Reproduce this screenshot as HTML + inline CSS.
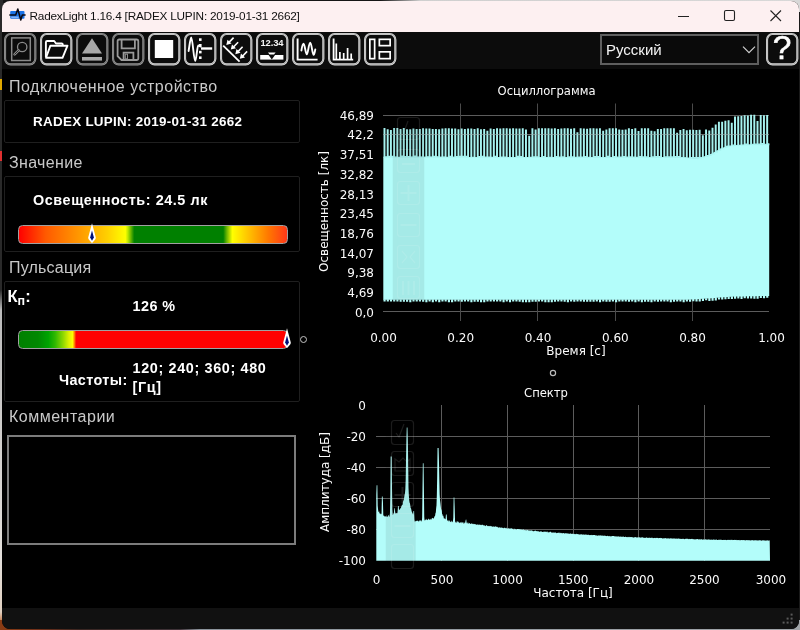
<!DOCTYPE html>
<html lang="ru">
<head>
<meta charset="utf-8">
<title>RadexLight 1.16.4</title>
<style>
*{box-sizing:border-box;margin:0;padding:0}
html,body{width:800px;height:630px;overflow:hidden;background:#1a1a1a}
body{position:relative;font-family:"Liberation Sans","DejaVu Sans",sans-serif;color:#fff}
.abs{position:absolute}
#desk-top{left:0;top:0;width:800px;height:12px;background:linear-gradient(90deg,#151515 0,#151515 380px,#cfcfcf 420px,#d8d8d8 800px)}
#desk-left{left:0;top:0;width:3px;height:630px;background:linear-gradient(180deg,#2a2a2a 0,#2a2a2a 79px,#e0a800 79px,#e0a800 90px,#2a2a2a 90px,#2a2a2a 151px,#e03030 151px,#e03030 161px,#2a2a2a 161px,#2a2a2a 290px,#bbb 310px,#e4e0dc 560px,#e0d0c0 612px,#c06830 624px,#8a3c14 630px)}
#desk-bot{left:0;top:620px;width:800px;height:10px;background:linear-gradient(90deg,#8a3c14 0,#70301a 40px,#3a2622 80px,#40343a 180px,#8c949c 200px,#a0a4a8 800px)}
#win{will-change:transform;left:2px;top:1px;width:796.5px;height:627.5px;background:#000;border-radius:8px;overflow:hidden}
#title{left:0;top:0;width:797px;height:30.5px;background:#fdf0f1}
#title .t{left:27.5px;top:7.8px;font-size:11.8px;color:#111;white-space:nowrap;letter-spacing:-0.22px}
#toolbar{left:0;top:30.5px;width:797px;height:37px;background:#0c0c0c}
.btn{position:absolute;top:1.5px;width:32.4px;height:32.4px}
.btn svg{position:absolute;left:0;top:0;width:32.4px;height:32.4px;overflow:visible}
.fr1{fill:#0c0c0c;stroke:#dedede;stroke-width:2.1}
.fr2{fill:none;stroke:#8c8c8c;stroke-width:0.6}
.dis .fr1{stroke:#9a9a9a}
.dis .fr2{stroke:#555}
.glabel{position:absolute;left:7px;font-size:16px;color:#c9c9c9;white-space:nowrap}
.gbox{position:absolute;left:2px;width:296px;border:1px solid #1f1f1f;border-radius:2px}
.b{font-weight:bold;white-space:nowrap;position:absolute}
.bar{position:absolute;left:15.5px;width:270px;height:18.5px;border:1.5px solid #a0a0a0;border-radius:4.5px}
svg text{font-family:"DejaVu Sans","Liberation Sans",sans-serif;font-size:12px;fill:#fbfbfb}
#t1,#t2{font-size:11.6px}
</style>
</head>
<body>
<div id="desk-top" class="abs"></div>
<div id="desk-left" class="abs"></div>
<div id="desk-bot" class="abs"></div>
<div id="win" class="abs">
  <div id="title" class="abs">
    <svg class="abs" style="left:7px;top:7px" width="18" height="16" viewBox="0 0 18 16">
      <rect x="1.2" y="2.9" width="14.3" height="7.9" rx="1" fill="#1a73e8"/>
      <rect x="2.2" y="8.6" width="7.4" height="1.2" fill="#9cc4ff"/>
      <path d="M0.3 7 H6.7 L8.8 1 L11.8 12 L13.3 7 H16.6" fill="none" stroke="#0a0a14" stroke-width="1.5" stroke-linejoin="round"/>
    </svg>
    <div class="abs t">RadexLight 1.16.4 [RADEX LUPIN: 2019-01-31 2662]</div>
    <svg class="abs" style="left:660px;top:0" width="137" height="31" viewBox="0 0 137 31">
      <path d="M16 15.5 H27" stroke="#222" stroke-width="1" fill="none"/>
      <rect x="62.5" y="9.5" width="10" height="10" rx="1.5" fill="none" stroke="#222" stroke-width="1.1"/>
      <path d="M108.5 9.5 L119 20 M119 9.5 L108.5 20" stroke="#222" stroke-width="1.1" fill="none"/>
    </svg>
  </div>
  <div id="toolbar" class="abs">
    <!-- 1: preview (disabled) -->
    <div class="btn dis" style="left:2px"><svg viewBox="0 0 32.4 32.4"><rect class="fr1" x="1.05" y="1.05" width="30.3" height="30.3" rx="5.6"/><rect class="fr2" x="1.05" y="1.05" width="30.3" height="30.3" rx="5.6"/>
      <rect x="7.7" y="4.9" width="18.6" height="22.6" fill="none" stroke="#8a8a8a" stroke-width="1.5"/>
      <circle cx="18.2" cy="14" r="4.7" fill="none" stroke="#8a8a8a" stroke-width="1.3"/>
      <path d="M14.6 17.4 L10.6 21.4" stroke="#8a8a8a" stroke-width="2.6" stroke-linecap="round" fill="none"/>
      <path d="M14.4 17.6 L10.8 21.2" stroke="#0c0c0c" stroke-width="0.8" stroke-linecap="round" fill="none"/>
    </svg></div>
    <!-- 2: open -->
    <div class="btn" style="left:38px"><svg viewBox="0 0 32.4 32.4"><rect class="fr1" x="1.05" y="1.05" width="30.3" height="30.3" rx="5.6"/><rect class="fr2" x="1.05" y="1.05" width="30.3" height="30.3" rx="5.6"/>
      <path d="M5.9 24 V9.2 Q5.9 8 7.1 8 H14.2 L16 10.5 H21.6 Q22.8 10.5 22.8 11.7 V12.5" fill="none" stroke="#fff" stroke-width="1.9" stroke-linejoin="round"/>
      <path d="M10.4 12.7 H27.5 L22.5 24.8 H6 Z" fill="none" stroke="#fff" stroke-width="1.9" stroke-linejoin="round"/>
    </svg></div>
    <!-- 3: eject -->
    <div class="btn dis" style="left:74px"><svg viewBox="0 0 32.4 32.4"><rect class="fr1" x="1.05" y="1.05" width="30.3" height="30.3" rx="5.6"/><rect class="fr2" x="1.05" y="1.05" width="30.3" height="30.3" rx="5.6"/>
      <path d="M16 5.2 L26 20.6 H6 Z" fill="#a8a8a8"/>
      <rect x="6" y="24" width="20" height="3.6" fill="#a8a8a8"/>
    </svg></div>
    <!-- 4: save (disabled) -->
    <div class="btn dis" style="left:110px"><svg viewBox="0 0 32.4 32.4"><rect class="fr1" x="1.05" y="1.05" width="30.3" height="30.3" rx="5.6"/><rect class="fr2" x="1.05" y="1.05" width="30.3" height="30.3" rx="5.6"/>
      <path d="M7.2 6.5 H24.5 Q26.3 6.5 26.3 8.3 V25.2 Q26.3 27 24.5 27 H9.5 L5.6 23.2 V8.1 Q5.6 6.5 7.2 6.5 Z" fill="none" stroke="#9a9a9a" stroke-width="1.8"/>
      <path d="M9.6 6.5 V15.4 H22.9 V6.5" fill="none" stroke="#9a9a9a" stroke-width="1.8"/>
      <path d="M11.6 27 V19.6 H21.4 V27" fill="none" stroke="#9a9a9a" stroke-width="1.8"/>
      <rect x="13.3" y="21.2" width="2.2" height="4.6" fill="none" stroke="#8c8c8c" stroke-width="1"/>
    </svg></div>
    <!-- 5: stop -->
    <div class="btn" style="left:146px"><svg viewBox="0 0 32.4 32.4"><rect class="fr1" x="1.05" y="1.05" width="30.3" height="30.3" rx="5.6"/><rect class="fr2" x="1.05" y="1.05" width="30.3" height="30.3" rx="5.6"/>
      <rect x="6.8" y="7" width="18.4" height="18" fill="#fff"/>
    </svg></div>
    <!-- 6: trigger -->
    <div class="btn" style="left:182px"><svg viewBox="0 0 32.4 32.4"><rect class="fr1" x="1.05" y="1.05" width="30.3" height="30.3" rx="5.6"/><rect class="fr2" x="1.05" y="1.05" width="30.3" height="30.3" rx="5.6"/>
      <path d="M4.6 18 C5.6 12 6.4 4.5 7.2 4.5 C8.6 4.5 9.8 28 11.2 28 C12.4 28 13.2 12.5 14.2 12.5 C15 12.5 15.6 13.6 16.6 13.6" fill="none" stroke="#fff" stroke-width="1.9" stroke-linecap="round"/>
      <rect x="15" y="5.3" width="2.6" height="2.6" fill="#fff"/>
      <rect x="15" y="11" width="2.6" height="2.6" fill="#fff"/>
      <rect x="15" y="17.8" width="2.6" height="2.6" fill="#fff"/>
      <rect x="15" y="23.4" width="2.6" height="2.6" fill="#fff"/>
      <rect x="17" y="14.3" width="11.2" height="2.4" fill="#fff"/>
    </svg></div>
    <!-- 7: light sensor -->
    <div class="btn" style="left:218px"><svg viewBox="0 0 32.4 32.4"><rect class="fr1" x="1.05" y="1.05" width="30.3" height="30.3" rx="5.6"/><rect class="fr2" x="1.05" y="1.05" width="30.3" height="30.3" rx="5.6"/>
      <path d="M3.2 12.6 L19.6 28.6" stroke="#fff" stroke-width="1.8" fill="none"/>
      <g id="arr"><path d="M13.6 4.6 L9 9.4" stroke="#fff" stroke-width="1.6" fill="none"/><path d="M6.3 12 L7.5 6.8 L11.5 10.6 Z" fill="#fff"/></g>
      <use href="#arr" x="4.5" y="4.6"/>
      <use href="#arr" x="9" y="9.2"/>
      <use href="#arr" x="13.5" y="13.8"/>
    </svg></div>
    <!-- 8: 12.34 -->
    <div class="btn" style="left:254px"><svg viewBox="0 0 32.4 32.4"><rect class="fr1" x="1.05" y="1.05" width="30.3" height="30.3" rx="5.6"/><rect class="fr2" x="1.05" y="1.05" width="30.3" height="30.3" rx="5.6"/>
      <text x="16" y="13.2" text-anchor="middle" style="font-family:'Liberation Sans',sans-serif;font-weight:bold;font-size:9.4px;fill:#f4f4f4;letter-spacing:-0.1px">12.34</text>
      <rect x="4.2" y="22" width="23.2" height="4.6" fill="#fff"/>
      <path d="M11.6 19.6 H20 L15.8 25.4 Z" fill="#0c0c0c" stroke="#0c0c0c" stroke-width="1.2"/>
      <path d="M12 19.4 H19.6 L18 21.6 H13.6 Z" fill="#fff"/>
    </svg></div>
    <!-- 9: oscillogram -->
    <div class="btn" style="left:290px"><svg viewBox="0 0 32.4 32.4"><rect class="fr1" x="1.05" y="1.05" width="30.3" height="30.3" rx="5.6"/><rect class="fr2" x="1.05" y="1.05" width="30.3" height="30.3" rx="5.6"/>
      <path d="M5.6 5.4 V26.6 H25.6" fill="none" stroke="#fff" stroke-width="1.9"/>
      <path d="M9.4 17.5 C10 14 10.8 10.8 11.6 10.8 C12.8 10.8 13.6 21.4 14.8 21.4 C16 21.4 16.8 9.6 18.2 9.6 C19.6 9.6 20.4 21.8 21.6 21.8 C22.4 21.8 22.8 18.6 23.3 16.4" fill="none" stroke="#fff" stroke-width="1.9" stroke-linecap="round"/>
    </svg></div>
    <!-- 10: spectrum -->
    <div class="btn" style="left:326px"><svg viewBox="0 0 32.4 32.4"><rect class="fr1" x="1.05" y="1.05" width="30.3" height="30.3" rx="5.6"/><rect class="fr2" x="1.05" y="1.05" width="30.3" height="30.3" rx="5.6"/>
      <path d="M5.6 5.4 V26.6 H25.2" fill="none" stroke="#fff" stroke-width="1.8"/>
      <path d="M8.3 10.4 V26 M11.9 19 V26 M15.7 20 V26 M19.6 15 V26 M23.2 20.4 V26" stroke="#fff" stroke-width="1.7" fill="none"/>
    </svg></div>
    <!-- 11: layout -->
    <div class="btn" style="left:362px"><svg viewBox="0 0 32.4 32.4"><rect class="fr1" x="1.05" y="1.05" width="30.3" height="30.3" rx="5.6"/><rect class="fr2" x="1.05" y="1.05" width="30.3" height="30.3" rx="5.6"/>
      <rect x="5.85" y="6.35" width="4.8" height="19.3" fill="none" stroke="#fff" stroke-width="1.7"/>
      <rect x="15.35" y="6.35" width="10.8" height="6.3" fill="none" stroke="#fff" stroke-width="1.7"/>
      <rect x="15.35" y="18.85" width="10.8" height="6.8" fill="none" stroke="#fff" stroke-width="1.7"/>
    </svg></div>
    <!-- combo -->
    <div class="abs" style="left:597.5px;top:2.5px;width:159.5px;height:31px;border:2px solid #5f5f5f;background:#0a0a0a">
      <div class="abs" style="left:4.5px;top:4.5px;font-size:15px;color:#f4f4f4;white-space:nowrap" id="lang">Русский</div>
      <svg class="abs" style="left:140px;top:9px" width="16" height="10" viewBox="0 0 16 10"><path d="M1 1.6 L7 7.6 L13 1.6" fill="none" stroke="#d0d0d0" stroke-width="1.2"/></svg>
    </div>
    <!-- help -->
    <div class="btn" style="left:764px"><svg viewBox="0 0 32.4 32.4"><rect class="fr1" x="1.05" y="1.05" width="30.3" height="30.3" rx="5.6"/><rect class="fr2" x="1.05" y="1.05" width="30.3" height="30.3" rx="5.6"/></svg><div class="abs" style="left:0px;top:-2.7px;width:32px;text-align:center;font-size:33.5px;line-height:36px;color:#fff;-webkit-text-stroke:0.5px #fff" id="q">?</div></div>
  </div>

  <!-- left panel -->
  <div class="glabel" style="top:76.6px;letter-spacing:0.5px" id="gl1">Подключенное устройство</div>
  <div class="gbox" style="top:98.5px;height:43.5px"></div>
  <div class="b" style="left:31px;top:112.5px;font-size:13.4px;letter-spacing:0.3px" id="dev">RADEX LUPIN: 2019-01-31 2662</div>

  <div class="glabel" style="top:153.1px;letter-spacing:0.35px" id="gl2">Значение</div>
  <div class="gbox" style="top:175px;height:76px"></div>
  <div class="b" style="left:31px;top:191px;font-size:14.4px;letter-spacing:0.57px" id="lux">Освещенность: 24.5 лк</div>
  <div class="bar" style="top:224px;background:linear-gradient(90deg,#ff0000 0%,#ff5a00 10%,#ffa000 24%,#ffd000 33%,#ffff00 39.7%,#c0e800 40.6%,#008000 43%,#008000 76.2%,#70b800 77.6%,#ffff00 79.6%,#ffc800 85%,#ff7800 93%,#ff3818 100%)"></div>
  <svg class="abs" style="left:84px;top:222.4px" width="12" height="22" viewBox="0 0 12 22"><path d="M6 0.3 L9.8 14.6 Q9.9 15.6 9.2 16.4 L6.6 19.6 Q6 20.2 5.4 19.6 L2.8 16.4 Q2.1 15.6 2.2 14.6 Z" fill="#fff"/><path d="M6 7.6 L7.9 14.6 L6 17.8 L4.1 14.6 Z" fill="#00107a"/></svg>

  <div class="glabel" style="top:258px;letter-spacing:0.2px" id="gl3">Пульсация</div>
  <div class="gbox" style="top:280px;height:121px"></div>
  <div class="b" style="left:5.5px;top:285.5px;font-size:16.5px" id="kp">К<span style="font-size:12.5px;position:relative;top:3.5px">п</span>:</div>
  <div class="b" style="left:130.5px;top:296.5px;font-size:14.4px;letter-spacing:0.46px" id="pct">126 %</div>
  <div class="bar" style="top:329.2px;background:linear-gradient(90deg,#008000 0%,#008800 7%,#00a400 11%,#30b800 13.5%,#90d800 16.5%,#d8f000 18.5%,#ffff00 20%,#ff8000 20.7%,#ff0000 21.3%,#ff0000 100%)"></div>
  <svg class="abs" style="left:278.6px;top:327.4px" width="12" height="22" viewBox="0 0 12 22"><path d="M6 0.3 L9.8 14.6 Q9.9 15.6 9.2 16.4 L6.6 19.6 Q6 20.2 5.4 19.6 L2.8 16.4 Q2.1 15.6 2.2 14.6 Z" fill="#fff"/><path d="M6 7.6 L7.9 14.6 L6 17.8 L4.1 14.6 Z" fill="#00107a"/></svg>
  <div class="abs" style="left:297.9px;top:334.6px;width:7px;height:7px;border:1.5px solid #c4c4c4;border-radius:50%"></div>
  <div class="b" style="left:57px;top:370.5px;font-size:14.4px;letter-spacing:0.38px" id="freq">Частоты:</div>
  <div class="b" style="left:130.5px;top:357.6px;font-size:14.4px;line-height:19.8px;white-space:normal;width:160px;letter-spacing:0.64px" id="fv">120; 240; 360; 480 [Гц]</div>

  <div class="glabel" style="top:407.2px;letter-spacing:0.5px" id="gl4">Комментарии</div>
  <div class="abs" style="left:5.2px;top:433.6px;width:289px;height:110.4px;border:2px solid #7c7c7c;background:#000"></div>

  <!-- status bar -->
  <div class="abs" style="left:0;top:606.5px;width:797px;height:22px;background:#111"></div>
  <svg class="abs" style="left:779.7px;top:611.8px" width="14" height="14" viewBox="0 0 14 14" fill="#5a5a5a">
    <rect x="8.6" y="0.6" width="2" height="2"/><rect x="4.6" y="4.6" width="2" height="2"/><rect x="8.6" y="4.6" width="2" height="2"/><rect x="0.6" y="8.6" width="2" height="2"/><rect x="4.6" y="8.6" width="2" height="2"/><rect x="8.6" y="8.6" width="2" height="2"/>
  </svg>

  <!-- charts: svg positioned so that its coords = page coords -->
  <svg class="abs" style="left:-2px;top:-1px" width="800" height="630" viewBox="0 0 800 630">
    <!-- Oscillogram -->
    <text x="546.5" y="94.5" text-anchor="middle" id="t1">Осциллограмма</text>
    <g stroke="#5c5c5c" stroke-width="1" fill="none">
      <path d="M383 115.5 H769 M383 134.5 H769 M383 311.5 H769"/>
      <path d="M460.5 103.5 V321 M537.5 103.5 V321 M615.5 103.5 V321 M692.5 103.5 V321" stroke="#4a4a4a"/>
    </g>
    <path d="M383.3 156.5 L383.3 156.8 L387.3 156.8 L391.3 156.8 L395.3 156.8 L399.3 156.8 L403.3 156.8 L407.3 156.8 L411.3 156.8 L415.3 156.8 L419.3 156.8 L423.3 156.8 L427.3 156.8 L431.3 156.8 L435.3 156.8 L439.3 156.8 L443.3 156.8 L447.3 156.8 L451.3 156.8 L455.3 156.8 L459.3 156.9 L463.3 156.9 L467.3 156.9 L471.3 156.9 L475.3 156.9 L479.3 156.9 L483.3 156.9 L487.3 156.9 L491.3 156.9 L495.3 156.9 L499.3 156.9 L503.3 156.9 L507.3 156.9 L511.3 156.9 L515.3 156.9 L519.3 156.9 L523.3 156.9 L527.3 156.9 L531.3 156.9 L535.3 156.9 L539.3 156.9 L543.3 156.9 L547.3 156.9 L551.3 156.9 L555.3 156.9 L559.3 156.9 L563.3 156.9 L567.3 156.9 L571.3 156.9 L575.3 156.9 L579.3 156.9 L583.3 156.9 L587.3 156.9 L591.3 156.9 L595.3 156.9 L599.3 156.9 L603.3 156.9 L607.3 157.0 L611.3 157.0 L615.3 157.0 L619.3 157.0 L623.3 157.0 L627.3 157.0 L631.3 157.0 L635.3 157.0 L639.3 157.0 L643.3 157.0 L647.3 157.0 L651.3 157.0 L655.3 157.0 L659.3 157.0 L663.3 157.0 L667.3 157.0 L671.3 157.0 L675.3 157.0 L679.3 157.0 L683.3 157.3 L687.3 157.6 L691.3 157.9 L695.3 158.2 L699.3 157.5 L703.3 156.5 L707.3 155.5 L711.3 153.7 L715.3 151.5 L719.3 149.2 L723.3 147.4 L727.3 145.8 L731.3 145.4 L735.3 145.0 L739.3 144.8 L743.3 144.6 L747.3 144.4 L751.3 144.3 L755.3 144.3 L759.3 144.3 L763.3 144.3 L767.3 144.3 L769.2 144.3 L769.2 296.0 L767.3 296.0 L763.3 296.1 L759.3 296.1 L755.3 296.2 L751.3 296.3 L747.3 296.3 L743.3 296.4 L739.3 296.4 L735.3 296.5 L731.3 296.8 L727.3 297.0 L723.3 297.3 L719.3 297.6 L715.3 297.9 L711.3 298.2 L707.3 298.5 L703.3 298.8 L699.3 299.0 L695.3 299.3 L691.3 299.6 L687.3 299.7 L683.3 299.7 L679.3 299.7 L675.3 299.7 L671.3 299.7 L667.3 299.7 L663.3 299.7 L659.3 299.7 L655.3 299.7 L651.3 299.7 L647.3 299.7 L643.3 299.7 L639.3 299.7 L635.3 299.7 L631.3 299.7 L627.3 299.7 L623.3 299.7 L619.3 299.7 L615.3 299.7 L611.3 299.7 L607.3 299.7 L603.3 299.7 L599.3 299.7 L595.3 299.7 L591.3 299.7 L587.3 299.7 L583.3 299.7 L579.3 299.7 L575.3 299.7 L571.3 299.7 L567.3 299.7 L563.3 299.7 L559.3 299.7 L555.3 299.7 L551.3 299.7 L547.3 299.7 L543.3 299.7 L539.3 299.7 L535.3 299.7 L531.3 299.7 L527.3 299.7 L523.3 299.7 L519.3 299.7 L515.3 299.7 L511.3 299.7 L507.3 299.7 L503.3 299.7 L499.3 299.7 L495.3 299.7 L491.3 299.7 L487.3 299.7 L483.3 299.7 L479.3 299.7 L475.3 299.7 L471.3 299.7 L467.3 299.7 L463.3 299.7 L459.3 299.7 L455.3 299.7 L451.3 299.7 L447.3 299.7 L443.3 299.7 L439.3 299.7 L435.3 299.7 L431.3 299.7 L427.3 299.7 L423.3 299.7 L419.3 299.7 L415.3 299.7 L411.3 299.7 L407.3 299.7 L403.3 299.7 L399.3 299.7 L395.3 299.7 L391.3 299.7 L387.3 299.7 L383.3 299.7Z" fill="#b3fdfa"/>
    <path d="M383.50 157.50 h1.95 V128.10 h-1.95 Z M385.45 157.70 h1.27 V156.13 h-1.27 Z M386.72 157.50 h1.95 V129.30 h-1.95 Z M388.67 157.70 h1.27 V155.65 h-1.27 Z M389.93 157.50 h1.95 V129.93 h-1.95 Z M391.88 157.70 h1.27 V155.64 h-1.27 Z M393.15 157.51 h1.95 V128.11 h-1.95 Z M395.10 157.71 h1.27 V156.39 h-1.27 Z M396.36 157.51 h1.95 V128.11 h-1.95 Z M398.31 157.71 h1.27 V157.02 h-1.27 Z M399.58 157.51 h1.95 V128.91 h-1.95 Z M401.53 157.71 h1.27 V155.59 h-1.27 Z M402.80 157.51 h1.95 V128.11 h-1.95 Z M404.75 157.71 h1.27 V155.98 h-1.27 Z M406.01 157.52 h1.95 V129.32 h-1.95 Z M407.96 157.72 h1.27 V156.01 h-1.27 Z M409.23 157.52 h1.95 V129.32 h-1.95 Z M411.18 157.72 h1.27 V156.54 h-1.27 Z M412.44 157.52 h1.95 V128.52 h-1.95 Z M414.39 157.72 h1.27 V155.62 h-1.27 Z M415.66 157.52 h1.95 V128.92 h-1.95 Z M417.61 157.72 h1.27 V156.61 h-1.27 Z M418.87 157.52 h1.95 V128.92 h-1.95 Z M420.82 157.72 h1.27 V156.46 h-1.27 Z M422.09 157.53 h1.95 V128.13 h-1.95 Z M424.04 157.73 h1.27 V156.80 h-1.27 Z M425.31 157.53 h1.95 V128.43 h-1.95 Z M427.26 157.73 h1.27 V156.37 h-1.27 Z M428.52 157.53 h1.95 V128.43 h-1.95 Z M430.47 157.73 h1.27 V156.50 h-1.27 Z M431.74 157.53 h1.95 V128.93 h-1.95 Z M433.69 157.73 h1.27 V155.80 h-1.27 Z M434.95 157.53 h1.95 V128.93 h-1.95 Z M436.90 157.73 h1.27 V156.21 h-1.27 Z M438.17 157.54 h1.95 V129.34 h-1.95 Z M440.12 157.74 h1.27 V156.80 h-1.27 Z M441.38 157.54 h1.95 V128.44 h-1.95 Z M443.33 157.74 h1.27 V156.49 h-1.27 Z M444.60 157.54 h1.95 V128.14 h-1.95 Z M446.55 157.74 h1.27 V157.05 h-1.27 Z M447.82 157.54 h1.95 V128.14 h-1.95 Z M449.77 157.74 h1.27 V155.64 h-1.27 Z M451.03 157.55 h1.95 V128.55 h-1.95 Z M452.98 157.75 h1.27 V156.86 h-1.27 Z M454.25 157.55 h1.95 V128.55 h-1.95 Z M456.20 157.75 h1.27 V156.10 h-1.27 Z M457.46 157.55 h1.95 V129.35 h-1.95 Z M459.41 157.75 h1.27 V155.74 h-1.27 Z M460.68 157.55 h1.95 V128.45 h-1.95 Z M462.63 157.75 h1.27 V155.76 h-1.27 Z M463.90 157.55 h1.95 V128.95 h-1.95 Z M465.85 157.75 h1.27 V155.68 h-1.27 Z M467.11 157.56 h1.95 V128.46 h-1.95 Z M469.06 157.76 h1.27 V156.97 h-1.27 Z M470.33 157.56 h1.95 V128.46 h-1.95 Z M472.28 157.76 h1.27 V156.69 h-1.27 Z M473.54 157.56 h1.95 V128.96 h-1.95 Z M475.49 157.76 h1.27 V157.09 h-1.27 Z M476.76 157.56 h1.95 V128.16 h-1.95 Z M478.71 157.76 h1.27 V155.93 h-1.27 Z M479.98 157.57 h1.95 V129.37 h-1.95 Z M481.93 157.77 h1.27 V155.86 h-1.27 Z M483.19 157.57 h1.95 V128.97 h-1.95 Z M485.14 157.77 h1.27 V156.42 h-1.27 Z M486.41 157.57 h1.95 V130.71 h-1.95 Z M488.36 157.77 h1.27 V156.39 h-1.27 Z M489.62 157.57 h1.95 V128.57 h-1.95 Z M491.57 157.77 h1.27 V156.85 h-1.27 Z M492.84 157.57 h1.95 V128.97 h-1.95 Z M494.79 157.77 h1.27 V155.74 h-1.27 Z M496.05 157.58 h1.95 V128.18 h-1.95 Z M498.00 157.78 h1.27 V157.15 h-1.27 Z M499.27 157.58 h1.95 V128.48 h-1.95 Z M501.22 157.78 h1.27 V156.54 h-1.27 Z M502.49 157.58 h1.95 V128.18 h-1.95 Z M504.44 157.78 h1.27 V156.44 h-1.27 Z M505.70 157.58 h1.95 V128.18 h-1.95 Z M507.65 157.78 h1.27 V156.98 h-1.27 Z M508.92 157.58 h1.95 V128.48 h-1.95 Z M510.87 157.78 h1.27 V157.11 h-1.27 Z M512.13 157.59 h1.95 V128.19 h-1.95 Z M514.08 157.79 h1.27 V156.95 h-1.27 Z M515.35 157.59 h1.95 V128.49 h-1.95 Z M517.30 157.79 h1.27 V155.73 h-1.27 Z M518.57 157.59 h1.95 V128.59 h-1.95 Z M520.52 157.79 h1.27 V156.01 h-1.27 Z M521.78 157.59 h1.95 V128.19 h-1.95 Z M523.73 157.79 h1.27 V157.12 h-1.27 Z M525.00 157.60 h1.95 V129.40 h-1.95 Z M526.95 157.80 h1.27 V157.06 h-1.27 Z M528.21 157.60 h1.95 V135.65 h-1.95 Z M530.16 157.80 h1.27 V156.71 h-1.27 Z M531.43 157.60 h1.95 V128.20 h-1.95 Z M533.38 157.80 h1.27 V156.17 h-1.27 Z M534.64 157.60 h1.95 V129.40 h-1.95 Z M536.59 157.80 h1.27 V156.13 h-1.27 Z M537.86 157.60 h1.95 V128.20 h-1.95 Z M539.81 157.80 h1.27 V156.89 h-1.27 Z M541.08 157.61 h1.95 V128.21 h-1.95 Z M543.03 157.81 h1.27 V155.93 h-1.27 Z M544.29 157.61 h1.95 V128.21 h-1.95 Z M546.24 157.81 h1.27 V157.19 h-1.27 Z M547.51 157.61 h1.95 V128.21 h-1.95 Z M549.46 157.81 h1.27 V156.72 h-1.27 Z M550.72 157.61 h1.95 V128.61 h-1.95 Z M552.67 157.81 h1.27 V157.19 h-1.27 Z M553.94 157.62 h1.95 V128.22 h-1.95 Z M555.89 157.82 h1.27 V155.98 h-1.27 Z M557.16 157.62 h1.95 V129.02 h-1.95 Z M559.11 157.82 h1.27 V156.62 h-1.27 Z M560.37 157.62 h1.95 V128.62 h-1.95 Z M562.32 157.82 h1.27 V156.17 h-1.27 Z M563.59 157.62 h1.95 V128.22 h-1.95 Z M565.54 157.82 h1.27 V157.08 h-1.27 Z M566.80 157.62 h1.95 V128.22 h-1.95 Z M568.75 157.82 h1.27 V156.32 h-1.27 Z M570.02 157.63 h1.95 V128.63 h-1.95 Z M571.97 157.83 h1.27 V156.26 h-1.27 Z M573.23 157.63 h1.95 V128.23 h-1.95 Z M575.18 157.83 h1.27 V156.79 h-1.27 Z M576.45 157.63 h1.95 V132.34 h-1.95 Z M578.40 157.83 h1.27 V156.58 h-1.27 Z M579.67 157.63 h1.95 V128.23 h-1.95 Z M581.62 157.83 h1.27 V156.61 h-1.27 Z M582.88 157.63 h1.95 V128.53 h-1.95 Z M584.83 157.83 h1.27 V155.88 h-1.27 Z M586.10 157.64 h1.95 V128.64 h-1.95 Z M588.05 157.84 h1.27 V156.68 h-1.27 Z M589.31 157.64 h1.95 V128.24 h-1.95 Z M591.26 157.84 h1.27 V156.96 h-1.27 Z M592.53 157.64 h1.95 V128.24 h-1.95 Z M594.48 157.84 h1.27 V156.11 h-1.27 Z M595.75 157.64 h1.95 V128.54 h-1.95 Z M597.70 157.84 h1.27 V156.06 h-1.27 Z M598.96 157.65 h1.95 V128.25 h-1.95 Z M600.91 157.85 h1.27 V157.10 h-1.27 Z M602.18 157.65 h1.95 V130.74 h-1.95 Z M604.13 157.85 h1.27 V156.95 h-1.27 Z M605.39 157.65 h1.95 V129.45 h-1.95 Z M607.34 157.85 h1.27 V155.86 h-1.27 Z M608.61 157.65 h1.95 V128.25 h-1.95 Z M610.56 157.85 h1.27 V157.05 h-1.27 Z M611.82 157.65 h1.95 V128.25 h-1.95 Z M613.77 157.85 h1.27 V155.93 h-1.27 Z M615.04 157.66 h1.95 V128.26 h-1.95 Z M616.99 157.86 h1.27 V156.55 h-1.27 Z M618.26 157.66 h1.95 V129.46 h-1.95 Z M620.21 157.86 h1.27 V156.55 h-1.27 Z M621.47 157.66 h1.95 V129.85 h-1.95 Z M623.42 157.86 h1.27 V155.97 h-1.27 Z M624.69 157.66 h1.95 V129.46 h-1.95 Z M626.64 157.86 h1.27 V156.39 h-1.27 Z M627.90 157.66 h1.95 V128.26 h-1.95 Z M629.85 157.86 h1.27 V156.37 h-1.27 Z M631.12 157.67 h1.95 V129.07 h-1.95 Z M633.07 157.87 h1.27 V156.48 h-1.27 Z M634.34 157.67 h1.95 V128.27 h-1.95 Z M636.29 157.87 h1.27 V156.79 h-1.27 Z M637.55 157.67 h1.95 V131.11 h-1.95 Z M639.50 157.87 h1.27 V156.00 h-1.27 Z M640.77 157.67 h1.95 V128.27 h-1.95 Z M642.72 157.87 h1.27 V156.30 h-1.27 Z M643.98 157.68 h1.95 V128.28 h-1.95 Z M645.93 157.88 h1.27 V156.36 h-1.27 Z M647.20 157.68 h1.95 V128.28 h-1.95 Z M649.15 157.88 h1.27 V157.11 h-1.27 Z M650.41 157.68 h1.95 V130.75 h-1.95 Z M652.36 157.88 h1.27 V156.27 h-1.27 Z M653.63 157.68 h1.95 V131.23 h-1.95 Z M655.58 157.88 h1.27 V156.03 h-1.27 Z M656.85 157.68 h1.95 V129.08 h-1.95 Z M658.80 157.88 h1.27 V155.94 h-1.27 Z M660.06 157.69 h1.95 V129.09 h-1.95 Z M662.01 157.89 h1.27 V157.28 h-1.27 Z M663.28 157.69 h1.95 V128.29 h-1.95 Z M665.23 157.89 h1.27 V156.26 h-1.27 Z M666.49 157.69 h1.95 V128.29 h-1.95 Z M668.44 157.89 h1.27 V156.23 h-1.27 Z M669.71 157.69 h1.95 V128.29 h-1.95 Z M671.66 157.89 h1.27 V156.31 h-1.27 Z M672.93 157.70 h1.95 V128.30 h-1.95 Z M674.88 157.90 h1.27 V155.88 h-1.27 Z M676.14 157.70 h1.95 V132.72 h-1.95 Z M678.09 157.90 h1.27 V156.12 h-1.27 Z M679.36 157.70 h1.95 V130.07 h-1.95 Z M681.31 157.90 h1.27 V156.91 h-1.27 Z M682.57 157.91 h1.95 V129.09 h-1.95 Z M684.52 158.11 h1.27 V157.22 h-1.27 Z M685.79 158.17 h1.95 V130.37 h-1.95 Z M687.74 158.37 h1.27 V157.64 h-1.27 Z M689.00 158.43 h1.95 V129.65 h-1.95 Z M690.95 158.63 h1.27 V156.88 h-1.27 Z M692.22 158.69 h1.95 V129.80 h-1.95 Z M694.17 158.89 h1.27 V157.12 h-1.27 Z M695.44 158.95 h1.95 V130.10 h-1.95 Z M697.39 159.15 h1.27 V157.09 h-1.27 Z M698.65 158.34 h1.95 V129.80 h-1.95 Z M700.60 158.54 h1.27 V157.06 h-1.27 Z M701.87 157.53 h1.95 V135.24 h-1.95 Z M703.82 157.73 h1.27 V157.00 h-1.27 Z M705.08 156.73 h1.95 V129.56 h-1.95 Z M707.03 156.93 h1.27 V155.11 h-1.27 Z M708.30 155.85 h1.95 V130.49 h-1.95 Z M710.25 156.05 h1.27 V154.14 h-1.27 Z M711.52 154.24 h1.95 V127.66 h-1.95 Z M713.47 154.44 h1.27 V153.46 h-1.27 Z M714.73 152.54 h1.95 V124.56 h-1.95 Z M716.68 152.74 h1.27 V150.83 h-1.27 Z M717.95 150.53 h1.95 V121.65 h-1.95 Z M719.90 150.73 h1.27 V148.59 h-1.27 Z M721.16 149.09 h1.95 V121.80 h-1.95 Z M723.11 149.29 h1.27 V148.66 h-1.27 Z M724.38 147.67 h1.95 V120.68 h-1.95 Z M726.33 147.87 h1.27 V145.84 h-1.27 Z M727.59 146.44 h1.95 V120.23 h-1.95 Z M729.54 146.64 h1.27 V145.78 h-1.27 Z M730.81 146.12 h1.95 V122.79 h-1.95 Z M732.76 146.32 h1.27 V144.46 h-1.27 Z M734.03 145.80 h1.95 V116.50 h-1.95 Z M735.98 146.00 h1.27 V144.96 h-1.27 Z M737.24 145.64 h1.95 V116.14 h-1.95 Z M739.19 145.84 h1.27 V145.21 h-1.27 Z M740.46 145.48 h1.95 V115.98 h-1.95 Z M742.41 145.68 h1.27 V144.66 h-1.27 Z M743.67 145.32 h1.95 V115.31 h-1.95 Z M745.62 145.52 h1.27 V143.45 h-1.27 Z M746.89 145.16 h1.95 V115.45 h-1.95 Z M748.84 145.36 h1.27 V144.71 h-1.27 Z M750.11 145.00 h1.95 V114.80 h-1.95 Z M752.06 145.20 h1.27 V143.74 h-1.27 Z M753.32 145.00 h1.95 V114.83 h-1.95 Z M755.27 145.20 h1.27 V143.42 h-1.27 Z M756.54 145.00 h1.95 V121.06 h-1.95 Z M758.49 145.20 h1.27 V143.39 h-1.27 Z M759.75 145.00 h1.95 V114.90 h-1.95 Z M761.70 145.20 h1.27 V143.00 h-1.27 Z M762.97 145.00 h1.95 V115.23 h-1.95 Z M764.92 145.20 h1.27 V143.80 h-1.27 Z M766.18 145.00 h1.95 V114.97 h-1.95 Z M768.13 145.20 h1.27 V143.15 h-1.27 Z" fill="#a6f2ef"/>
    <path d="M383.50 299.20 h2.15 V301.40 h-2.15 Z M386.72 299.20 h2.15 V301.40 h-2.15 Z M389.93 299.20 h2.15 V301.60 h-2.15 Z M393.15 299.20 h2.15 V301.40 h-2.15 Z M396.36 299.20 h2.15 V301.40 h-2.15 Z M399.58 299.20 h2.15 V301.80 h-2.15 Z M402.80 299.20 h2.15 V301.80 h-2.15 Z M406.01 299.20 h2.15 V301.80 h-2.15 Z M409.23 299.20 h2.15 V302.20 h-2.15 Z M412.44 299.20 h2.15 V301.40 h-2.15 Z M415.66 299.20 h2.15 V301.60 h-2.15 Z M418.87 299.20 h2.15 V301.60 h-2.15 Z M422.09 299.20 h2.15 V301.80 h-2.15 Z M425.31 299.20 h2.15 V302.20 h-2.15 Z M428.52 299.20 h2.15 V301.40 h-2.15 Z M431.74 299.20 h2.15 V302.20 h-2.15 Z M434.95 299.20 h2.15 V301.40 h-2.15 Z M438.17 299.20 h2.15 V302.20 h-2.15 Z M441.38 299.20 h2.15 V301.60 h-2.15 Z M444.60 299.20 h2.15 V301.60 h-2.15 Z M447.82 299.20 h2.15 V302.20 h-2.15 Z M451.03 299.20 h2.15 V302.20 h-2.15 Z M454.25 299.20 h2.15 V301.60 h-2.15 Z M457.46 299.20 h2.15 V301.40 h-2.15 Z M460.68 299.20 h2.15 V301.80 h-2.15 Z M463.90 299.20 h2.15 V301.60 h-2.15 Z M467.11 299.20 h2.15 V301.60 h-2.15 Z M470.33 299.20 h2.15 V302.20 h-2.15 Z M473.54 299.20 h2.15 V301.80 h-2.15 Z M476.76 299.20 h2.15 V301.80 h-2.15 Z M479.98 299.20 h2.15 V302.20 h-2.15 Z M483.19 299.20 h2.15 V302.20 h-2.15 Z M486.41 299.20 h2.15 V301.40 h-2.15 Z M489.62 299.20 h2.15 V301.60 h-2.15 Z M492.84 299.20 h2.15 V301.60 h-2.15 Z M496.05 299.20 h2.15 V301.60 h-2.15 Z M499.27 299.20 h2.15 V301.40 h-2.15 Z M502.49 299.20 h2.15 V302.20 h-2.15 Z M505.70 299.20 h2.15 V301.60 h-2.15 Z M508.92 299.20 h2.15 V302.20 h-2.15 Z M512.13 299.20 h2.15 V301.60 h-2.15 Z M515.35 299.20 h2.15 V301.40 h-2.15 Z M518.57 299.20 h2.15 V301.80 h-2.15 Z M521.78 299.20 h2.15 V302.20 h-2.15 Z M525.00 299.20 h2.15 V302.20 h-2.15 Z M528.21 299.20 h2.15 V302.20 h-2.15 Z M531.43 299.20 h2.15 V301.80 h-2.15 Z M534.64 299.20 h2.15 V301.80 h-2.15 Z M537.86 299.20 h2.15 V301.60 h-2.15 Z M541.08 299.20 h2.15 V301.60 h-2.15 Z M544.29 299.20 h2.15 V302.20 h-2.15 Z M547.51 299.20 h2.15 V302.20 h-2.15 Z M550.72 299.20 h2.15 V302.20 h-2.15 Z M553.94 299.20 h2.15 V301.80 h-2.15 Z M557.16 299.20 h2.15 V301.40 h-2.15 Z M560.37 299.20 h2.15 V301.40 h-2.15 Z M563.59 299.20 h2.15 V301.80 h-2.15 Z M566.80 299.20 h2.15 V302.20 h-2.15 Z M570.02 299.20 h2.15 V301.60 h-2.15 Z M573.23 299.20 h2.15 V301.80 h-2.15 Z M576.45 299.20 h2.15 V301.60 h-2.15 Z M579.67 299.20 h2.15 V301.60 h-2.15 Z M582.88 299.20 h2.15 V301.80 h-2.15 Z M586.10 299.20 h2.15 V301.80 h-2.15 Z M589.31 299.20 h2.15 V301.80 h-2.15 Z M592.53 299.20 h2.15 V301.80 h-2.15 Z M595.75 299.20 h2.15 V301.60 h-2.15 Z M598.96 299.20 h2.15 V302.20 h-2.15 Z M602.18 299.20 h2.15 V301.60 h-2.15 Z M605.39 299.20 h2.15 V301.80 h-2.15 Z M608.61 299.20 h2.15 V301.80 h-2.15 Z M611.82 299.20 h2.15 V301.60 h-2.15 Z M615.04 299.20 h2.15 V302.20 h-2.15 Z M618.26 299.20 h2.15 V301.40 h-2.15 Z M621.47 299.20 h2.15 V301.40 h-2.15 Z M624.69 299.20 h2.15 V301.40 h-2.15 Z M627.90 299.20 h2.15 V301.80 h-2.15 Z M631.12 299.20 h2.15 V301.60 h-2.15 Z M634.34 299.20 h2.15 V302.20 h-2.15 Z M637.55 299.20 h2.15 V301.60 h-2.15 Z M640.77 299.20 h2.15 V302.20 h-2.15 Z M643.98 299.20 h2.15 V301.80 h-2.15 Z M647.20 299.20 h2.15 V301.80 h-2.15 Z M650.41 299.20 h2.15 V302.20 h-2.15 Z M653.63 299.20 h2.15 V301.40 h-2.15 Z M656.85 299.20 h2.15 V301.80 h-2.15 Z M660.06 299.20 h2.15 V301.60 h-2.15 Z M663.28 299.20 h2.15 V301.40 h-2.15 Z M666.49 299.20 h2.15 V301.60 h-2.15 Z M669.71 299.20 h2.15 V302.20 h-2.15 Z M672.93 299.20 h2.15 V301.80 h-2.15 Z M676.14 299.20 h2.15 V301.40 h-2.15 Z M679.36 299.20 h2.15 V301.60 h-2.15 Z M682.57 299.20 h2.15 V302.20 h-2.15 Z M685.79 299.20 h2.15 V301.60 h-2.15 Z M689.00 299.20 h2.15 V301.80 h-2.15 Z M692.22 299.04 h2.15 V301.24 h-2.15 Z M695.44 298.81 h2.15 V301.41 h-2.15 Z M698.65 298.58 h2.15 V301.58 h-2.15 Z M701.87 298.36 h2.15 V300.96 h-2.15 Z M705.08 298.13 h2.15 V300.33 h-2.15 Z M708.30 297.90 h2.15 V300.90 h-2.15 Z M711.52 297.67 h2.15 V300.67 h-2.15 Z M714.73 297.44 h2.15 V300.44 h-2.15 Z M717.95 297.21 h2.15 V299.41 h-2.15 Z M721.16 296.98 h2.15 V299.38 h-2.15 Z M724.38 296.76 h2.15 V299.16 h-2.15 Z M727.59 296.53 h2.15 V298.93 h-2.15 Z M730.81 296.30 h2.15 V298.90 h-2.15 Z M734.03 296.07 h2.15 V298.67 h-2.15 Z M737.24 295.97 h2.15 V298.57 h-2.15 Z M740.46 295.92 h2.15 V298.92 h-2.15 Z M743.67 295.87 h2.15 V298.27 h-2.15 Z M746.89 295.83 h2.15 V298.43 h-2.15 Z M750.11 295.78 h2.15 V298.38 h-2.15 Z M753.32 295.73 h2.15 V298.73 h-2.15 Z M756.54 295.69 h2.15 V298.69 h-2.15 Z M759.75 295.64 h2.15 V298.04 h-2.15 Z M762.97 295.59 h2.15 V298.19 h-2.15 Z M766.18 295.55 h2.15 V297.75 h-2.15 Z" fill="#b3fdfa"/>
    <path d="M383 134.5 H769" stroke="#808080" stroke-opacity="0.35" stroke-width="1" fill="none"/>
    <g text-anchor="end">
      <text x="374" y="119.7">46,89</text><text x="374" y="139.4">42,2</text><text x="374" y="159.1">37,51</text><text x="374" y="178.8">32,82</text><text x="374" y="198.5">28,13</text><text x="374" y="218.2">23,45</text><text x="374" y="237.9">18,76</text><text x="374" y="257.6">14,07</text><text x="374" y="277.3">9,38</text><text x="374" y="297">4,69</text><text x="374" y="316.7">0,0</text>
    </g>
    <g text-anchor="middle">
      <text x="383.5" y="342">0.00</text><text x="460.7" y="342">0.20</text><text x="538" y="342">0.40</text><text x="615.3" y="342">0.60</text><text x="692.5" y="342">0.80</text><text x="771.5" y="342">1.00</text>
      <text x="576" y="355">Время [с]</text>
      <text transform="translate(327.8 211.5) rotate(-90)" x="0" y="0">Освещенность [лк]</text>
    </g>
    <!-- overlay toolbar 1 -->
    <rect x="392.7" y="116.5" width="31.6" height="184" fill="#000" fill-opacity="0.075"/>
    <g fill="none" stroke="#ffffff" stroke-opacity="0.11" stroke-width="1.2">
      <rect x="397.5" y="117.5" width="22" height="22" rx="3"/>
      <rect x="397.5" y="149.5" width="22" height="23" rx="3"/>
      <rect x="397.5" y="181.5" width="22" height="23" rx="3"/>
      <rect x="397.5" y="213.5" width="22" height="23" rx="3"/>
      <rect x="397.5" y="245.5" width="22" height="23" rx="3"/>
      <rect x="397.5" y="276.5" width="22" height="22" rx="3"/>
      <path d="M408.5 185 V201 M400.5 193 H416.5 M400.5 225 H416.5 M402 164 H415 M408.5 281 V295 M403 281 V295 M414 281 V295" stroke-width="2"/>
      <path d="M402 251 L407 257 L402 263 M415 251 L410 257 L415 263"/>
      <path d="M404 132 L408 121"/>
    </g>
    <circle cx="553" cy="373" r="2.6" fill="none" stroke="#bbb" stroke-width="1.2"/>
    <!-- Spectrum -->
    <text x="546" y="397" text-anchor="middle" id="t2">Спектр</text>
    <g stroke="#5c5c5c" stroke-width="1" fill="none">
      <path d="M376 436.5 H770 M376 467.5 H770 M376 498.5 H770 M376 529.5 H770"/>
      <path d="M441.5 405 V561 M507.5 405 V561 M573.5 405 V561 M638.5 405 V561 M704.5 405 V561"/>
    </g>
    <path d="M376.3 560.8 L376.30 494.75 L376.65 485.30 L377.00 485.30 L377.35 485.30 L377.70 505.64 L378.05 509.17 L378.40 511.67 L378.75 512.03 L379.10 511.07 L379.45 513.28 L379.80 513.42 L380.15 513.36 L380.50 514.08 L380.85 514.34 L381.20 514.19 L381.55 513.17 L381.90 496.60 L382.25 496.60 L382.60 496.60 L382.95 501.97 L383.30 515.46 L383.65 515.39 L384.00 516.11 L384.35 515.80 L384.70 516.80 L385.05 516.56 L385.40 516.15 L385.75 516.69 L386.10 514.94 L386.45 516.41 L386.80 516.66 L387.15 516.46 L387.50 517.00 L387.85 516.31 L388.20 515.09 L388.55 514.99 L388.90 516.30 L389.25 517.01 L389.60 515.73 L389.95 513.58 L390.30 494.00 L390.65 456.40 L391.00 456.40 L391.35 456.40 L391.70 456.40 L392.05 490.01 L392.40 509.63 L392.75 515.12 L393.10 514.86 L393.45 513.03 L393.80 513.92 L394.15 509.98 L394.50 508.00 L394.85 508.00 L395.20 512.42 L395.55 512.99 L395.90 514.08 L396.25 512.78 L396.60 513.53 L396.95 512.94 L397.30 513.61 L397.65 511.03 L398.00 506.00 L398.35 506.00 L398.70 506.00 L399.05 510.30 L399.40 509.39 L399.75 509.66 L400.10 508.46 L400.45 508.58 L400.80 508.09 L401.15 507.35 L401.50 505.69 L401.85 505.60 L402.20 504.74 L402.55 504.95 L402.90 502.17 L403.25 501.07 L403.60 500.13 L403.95 499.06 L404.30 496.40 L404.65 494.61 L405.00 493.09 L405.35 488.84 L405.70 479.21 L406.05 458.11 L406.40 438.87 L406.75 427.50 L407.10 427.50 L407.45 427.50 L407.80 438.87 L408.15 459.89 L408.50 487.60 L408.85 495.25 L409.20 499.92 L409.55 502.48 L409.90 503.14 L410.25 504.95 L410.60 507.86 L410.95 508.27 L411.30 509.61 L411.65 511.23 L412.00 512.37 L412.35 512.72 L412.70 513.75 L413.05 514.77 L413.40 511.00 L413.75 511.00 L414.10 511.00 L414.45 519.60 L414.80 521.65 L415.15 521.25 L415.50 520.83 L415.85 521.72 L416.20 521.10 L416.55 520.99 L416.90 520.41 L417.25 520.85 L417.60 520.82 L417.95 520.83 L418.30 520.94 L418.65 522.11 L419.00 520.45 L419.35 520.02 L419.70 521.61 L420.05 520.51 L420.40 520.08 L420.75 520.77 L421.10 521.78 L421.45 519.93 L421.80 521.70 L422.15 517.46 L422.50 489.50 L422.85 463.20 L423.20 463.20 L423.55 463.20 L423.90 489.31 L424.25 516.87 L424.60 520.96 L424.95 519.67 L425.30 519.36 L425.65 520.34 L426.00 520.33 L426.35 519.51 L426.70 518.59 L427.05 520.17 L427.40 519.34 L427.75 520.35 L428.10 519.61 L428.45 518.80 L428.80 518.50 L429.15 520.34 L429.50 519.15 L429.85 519.57 L430.20 518.44 L430.55 519.93 L430.90 518.98 L431.25 519.80 L431.60 518.89 L431.95 517.94 L432.30 518.37 L432.65 517.96 L433.00 517.79 L433.35 518.74 L433.70 518.43 L434.05 517.68 L434.40 516.50 L434.75 516.23 L435.10 515.83 L435.45 513.31 L435.80 512.46 L436.15 508.32 L436.50 505.17 L436.85 494.56 L437.20 476.47 L437.55 448.10 L437.90 448.10 L438.25 448.10 L438.60 448.10 L438.95 460.62 L439.30 478.54 L439.65 493.93 L440.00 500.12 L440.35 502.60 L440.70 505.71 L441.05 508.87 L441.40 509.72 L441.75 510.85 L442.10 514.00 L442.45 514.20 L442.80 516.00 L443.15 515.62 L443.50 516.55 L443.85 518.41 L444.20 518.35 L444.55 518.79 L444.90 518.58 L445.25 519.57 L445.60 518.65 L445.95 514.50 L446.30 514.50 L446.65 514.50 L447.00 519.55 L447.35 520.30 L447.70 520.93 L448.05 520.52 L448.40 520.31 L448.75 521.47 L449.10 521.87 L449.45 520.07 L449.80 520.78 L450.15 521.58 L450.50 521.73 L450.85 522.15 L451.20 521.15 L451.55 520.29 L451.90 522.23 L452.25 522.28 L452.60 521.44 L452.95 521.36 L453.30 517.69 L453.65 497.60 L454.00 497.60 L454.35 497.60 L454.70 508.08 L455.05 520.86 L455.40 522.48 L455.75 522.26 L456.10 522.63 L456.45 522.78 L456.80 521.05 L457.15 522.62 L457.50 520.96 L457.85 521.28 L458.20 522.31 L458.55 521.18 L458.90 522.72 L459.25 523.31 L459.60 522.62 L459.95 522.46 L460.30 522.30 L460.65 523.06 L461.00 521.64 L461.35 522.12 L461.70 523.58 L462.05 521.97 L462.40 522.16 L462.75 523.37 L463.10 521.67 L463.45 522.90 L463.80 523.95 L464.15 522.41 L464.50 522.54 L464.85 523.73 L465.20 522.46 L465.55 520.72 L465.90 519.50 L466.25 519.50 L466.60 522.39 L466.95 523.56 L467.30 522.30 L467.65 522.65 L468.00 524.21 L468.35 523.73 L468.70 522.52 L469.05 522.89 L469.40 523.36 L469.75 523.28 L470.10 523.60 L470.45 523.89 L470.80 523.96 L471.15 523.58 L471.50 523.67 L471.85 523.24 L472.20 523.63 L472.55 524.34 L472.90 523.45 L473.25 524.01 L473.60 523.70 L473.95 524.42 L474.30 523.78 L474.65 524.15 L475.00 523.95 L475.35 524.74 L475.70 523.85 L476.05 524.51 L476.40 524.54 L476.75 524.93 L477.10 524.48 L477.45 525.04 L477.80 524.06 L478.15 524.75 L478.50 525.18 L478.85 524.19 L479.20 524.19 L479.55 524.93 L479.90 524.75 L480.25 525.15 L480.60 524.56 L480.95 524.93 L481.30 525.29 L481.65 524.85 L482.00 524.66 L482.35 524.66 L482.70 524.81 L483.05 524.88 L483.40 525.48 L483.75 525.37 L484.10 525.35 L484.45 525.20 L484.80 525.75 L485.15 525.93 L485.50 526.14 L485.85 525.54 L486.20 525.18 L486.55 525.19 L486.90 525.23 L487.25 525.69 L487.60 526.29 L487.95 525.94 L488.30 526.22 L488.65 525.81 L489.00 526.32 L489.35 525.81 L489.70 526.45 L490.05 525.64 L490.40 526.42 L490.75 525.85 L491.10 526.31 L491.45 526.24 L491.80 526.14 L492.15 526.68 L492.50 526.41 L492.85 526.64 L493.20 526.22 L493.55 526.72 L493.90 526.50 L494.25 526.51 L494.60 526.66 L494.95 527.11 L495.30 526.26 L495.65 526.47 L496.00 526.35 L496.35 527.05 L496.70 526.80 L497.05 526.81 L497.40 527.59 L497.75 526.55 L498.10 527.43 L498.45 527.41 L498.80 527.73 L499.15 527.03 L499.50 527.58 L499.85 527.47 L500.20 527.77 L500.55 527.98 L500.90 526.97 L501.25 527.92 L501.60 527.10 L501.95 527.88 L502.30 527.62 L502.65 528.04 L503.00 528.10 L503.35 528.29 L503.70 528.22 L504.05 527.44 L504.40 527.92 L504.75 527.38 L505.10 528.53 L505.45 527.82 L505.80 528.33 L506.15 527.73 L506.50 527.87 L506.85 528.66 L507.20 528.23 L507.55 528.66 L507.90 528.48 L508.25 528.42 L508.60 528.32 L508.95 528.09 L509.30 528.42 L509.65 528.74 L510.00 528.57 L510.35 528.68 L510.70 528.26 L511.05 528.61 L511.40 528.26 L511.75 528.25 L512.10 528.95 L512.45 528.48 L512.80 528.77 L513.15 529.49 L513.50 529.50 L513.85 528.58 L514.20 528.56 L514.55 528.99 L514.90 529.54 L515.25 528.79 L515.60 529.18 L515.95 529.50 L516.30 529.52 L516.65 529.58 L517.00 529.03 L517.35 529.04 L517.70 529.06 L518.05 529.08 L518.40 529.12 L518.75 529.37 L519.10 529.10 L519.45 529.19 L519.80 529.28 L520.15 530.07 L520.50 529.24 L520.85 529.12 L521.20 529.38 L521.55 529.41 L521.90 529.78 L522.25 529.96 L522.60 529.34 L522.95 529.81 L523.30 529.33 L523.65 529.32 L524.00 530.41 L524.35 529.66 L524.70 529.96 L525.05 529.90 L525.40 530.54 L525.75 529.80 L526.10 529.62 L526.45 530.31 L526.80 530.62 L527.15 529.89 L527.50 529.78 L527.85 530.34 L528.20 529.97 L528.55 530.52 L528.90 530.76 L529.25 530.66 L529.60 529.90 L529.95 530.69 L530.30 530.81 L530.65 530.41 L531.00 530.07 L531.35 530.47 L531.70 530.15 L532.05 531.33 L532.40 530.21 L532.75 531.08 L533.10 531.33 L533.45 531.24 L533.80 531.28 L534.15 530.82 L534.50 530.81 L534.85 531.15 L535.20 530.53 L535.55 530.51 L535.90 531.10 L536.25 531.12 L536.60 531.06 L536.95 531.56 L537.30 531.44 L537.65 530.86 L538.00 531.35 L538.35 531.52 L538.70 531.25 L539.05 531.13 L539.40 532.03 L539.75 531.68 L540.10 531.41 L540.45 530.99 L540.80 531.85 L541.15 532.04 L541.50 531.50 L541.85 531.05 L542.20 531.98 L542.55 532.04 L542.90 531.88 L543.25 531.60 L543.60 531.64 L543.95 532.31 L544.30 531.73 L544.65 531.42 L545.00 531.39 L545.35 531.39 L545.70 532.00 L546.05 531.77 L546.40 532.28 L546.75 531.54 L547.10 531.47 L547.45 531.60 L547.80 532.42 L548.15 531.96 L548.50 532.19 L548.85 532.64 L549.20 532.44 L549.55 531.79 L549.90 532.02 L550.25 531.83 L550.60 531.86 L550.95 531.76 L551.30 532.17 L551.65 532.64 L552.00 532.71 L552.35 532.75 L552.70 532.17 L553.05 532.84 L553.40 531.91 L553.75 532.98 L554.10 532.28 L554.45 532.66 L554.80 532.72 L555.15 532.09 L555.50 532.86 L555.85 532.86 L556.20 533.13 L556.55 532.85 L556.90 533.14 L557.25 532.88 L557.60 532.89 L557.95 532.42 L558.30 532.77 L558.65 532.91 L559.00 532.31 L559.35 533.41 L559.70 532.49 L560.05 532.85 L560.40 532.75 L560.75 533.26 L561.10 533.20 L561.45 532.85 L561.80 533.29 L562.15 533.29 L562.50 533.21 L562.85 533.23 L563.20 533.05 L563.55 533.12 L563.90 533.18 L564.25 533.44 L564.60 533.42 L564.95 533.37 L565.30 533.19 L565.65 533.18 L566.00 533.29 L566.35 533.30 L566.70 533.41 L567.05 533.24 L567.40 533.16 L567.75 533.77 L568.10 533.49 L568.45 533.50 L568.80 533.63 L569.15 533.77 L569.50 533.81 L569.85 533.82 L570.20 533.60 L570.55 533.42 L570.90 533.62 L571.25 533.65 L571.60 533.94 L571.95 533.78 L572.30 533.90 L572.65 533.56 L573.00 533.64 L573.35 534.14 L573.70 533.80 L574.05 534.06 L574.40 533.71 L574.75 534.13 L575.10 534.24 L575.45 534.12 L575.80 534.22 L576.15 533.79 L576.50 533.83 L576.85 534.18 L577.20 534.25 L577.55 533.93 L577.90 533.96 L578.25 534.43 L578.60 534.10 L578.95 534.43 L579.30 534.45 L579.65 534.40 L580.00 534.45 L580.35 534.17 L580.70 534.56 L581.05 534.44 L581.40 534.25 L581.75 534.32 L582.10 534.51 L582.45 534.71 L582.80 534.46 L583.15 534.36 L583.50 534.81 L583.85 534.54 L584.20 534.63 L584.55 534.67 L584.90 534.46 L585.25 534.56 L585.60 534.48 L585.95 534.63 L586.30 534.79 L586.65 534.60 L587.00 534.65 L587.35 534.70 L587.70 534.97 L588.05 534.67 L588.40 535.00 L588.75 534.59 L589.10 535.10 L589.45 535.18 L589.80 534.90 L590.15 534.96 L590.50 535.08 L590.85 535.23 L591.20 534.86 L591.55 535.06 L591.90 535.27 L592.25 535.22 L592.60 535.02 L592.95 535.05 L593.30 535.07 L593.65 534.95 L594.00 535.09 L594.35 534.96 L594.70 535.07 L595.05 535.32 L595.40 535.55 L595.75 535.17 L596.10 535.33 L596.45 535.23 L596.80 535.64 L597.15 535.61 L597.50 535.66 L597.85 535.67 L598.20 535.59 L598.55 535.62 L598.90 535.33 L599.25 535.39 L599.60 535.61 L599.95 535.51 L600.30 535.50 L600.65 535.33 L601.00 535.62 L601.35 535.71 L601.70 535.40 L602.05 535.42 L602.40 535.75 L602.75 535.62 L603.10 535.77 L603.45 535.80 L603.80 535.75 L604.15 535.70 L604.50 535.62 L604.85 535.79 L605.20 536.08 L605.55 535.70 L605.90 535.64 L606.25 536.13 L606.60 536.10 L606.95 535.97 L607.30 535.75 L607.65 535.82 L608.00 536.14 L608.35 535.92 L608.70 536.26 L609.05 536.37 L609.40 535.84 L609.75 536.32 L610.10 536.38 L610.45 536.21 L610.80 536.22 L611.15 536.25 L611.50 536.22 L611.85 536.22 L612.20 536.04 L612.55 535.95 L612.90 536.01 L613.25 536.00 L613.60 536.11 L613.95 536.11 L614.30 536.58 L614.65 536.11 L615.00 536.43 L615.35 536.47 L615.70 536.21 L616.05 536.36 L616.40 536.44 L616.75 536.53 L617.10 536.55 L617.45 536.42 L617.80 536.56 L618.15 536.51 L618.50 536.26 L618.85 536.61 L619.20 536.85 L619.55 536.71 L619.90 536.57 L620.25 536.63 L620.60 536.54 L620.95 536.60 L621.30 536.90 L621.65 536.41 L622.00 536.78 L622.35 536.50 L622.70 537.01 L623.05 536.59 L623.40 536.83 L623.75 536.54 L624.10 537.01 L624.45 537.05 L624.80 537.07 L625.15 536.68 L625.50 536.57 L625.85 536.94 L626.20 536.98 L626.55 537.00 L626.90 537.15 L627.25 537.20 L627.60 536.81 L627.95 537.21 L628.30 537.20 L628.65 536.74 L629.00 537.00 L629.35 536.82 L629.70 537.27 L630.05 537.25 L630.40 536.89 L630.75 536.88 L631.10 537.34 L631.45 536.93 L631.80 537.06 L632.15 537.20 L632.50 537.09 L632.85 537.39 L633.20 537.44 L633.55 537.50 L633.90 537.43 L634.25 537.26 L634.60 537.24 L634.95 537.29 L635.30 536.99 L635.65 537.02 L636.00 537.59 L636.35 537.17 L636.70 537.58 L637.05 537.54 L637.40 537.32 L637.75 537.45 L638.10 537.45 L638.45 537.23 L638.80 537.17 L639.15 537.23 L639.50 537.55 L639.85 537.29 L640.20 537.79 L640.55 537.64 L640.90 537.25 L641.25 537.32 L641.60 537.64 L641.95 537.29 L642.30 537.31 L642.65 537.31 L643.00 537.81 L643.35 537.76 L643.70 537.43 L644.05 537.90 L644.40 537.66 L644.75 537.74 L645.10 537.88 L645.45 537.82 L645.80 537.81 L646.15 537.62 L646.50 537.55 L646.85 537.53 L647.20 537.44 L647.55 538.00 L647.90 537.99 L648.25 537.91 L648.60 537.52 L648.95 537.93 L649.30 537.87 L649.65 537.78 L650.00 537.59 L650.35 537.99 L650.70 537.92 L651.05 537.72 L651.40 537.75 L651.75 537.72 L652.10 537.78 L652.45 538.14 L652.80 537.62 L653.15 538.06 L653.50 538.16 L653.85 538.09 L654.20 538.00 L654.55 537.93 L654.90 537.83 L655.25 538.12 L655.60 538.15 L655.95 537.71 L656.30 538.01 L656.65 537.77 L657.00 538.00 L657.35 537.76 L657.70 538.08 L658.05 538.18 L658.40 538.26 L658.75 538.12 L659.10 537.96 L659.45 538.06 L659.80 538.12 L660.15 537.99 L660.50 538.28 L660.85 537.87 L661.20 538.06 L661.55 537.92 L661.90 538.29 L662.25 538.38 L662.60 538.48 L662.95 538.26 L663.30 538.49 L663.65 538.24 L664.00 538.29 L664.35 538.04 L664.70 538.45 L665.05 538.53 L665.40 538.12 L665.75 538.09 L666.10 538.57 L666.45 538.47 L666.80 538.32 L667.15 538.63 L667.50 538.38 L667.85 538.12 L668.20 538.26 L668.55 538.14 L668.90 538.65 L669.25 538.64 L669.60 538.56 L669.95 538.37 L670.30 538.52 L670.65 538.37 L671.00 538.34 L671.35 538.42 L671.70 538.50 L672.05 538.29 L672.40 538.79 L672.75 538.59 L673.10 538.78 L673.45 538.31 L673.80 538.60 L674.15 538.66 L674.50 538.62 L674.85 538.29 L675.20 538.63 L675.55 538.61 L675.90 538.83 L676.25 538.59 L676.60 538.66 L676.95 538.53 L677.30 538.63 L677.65 538.77 L678.00 538.52 L678.35 538.52 L678.70 538.59 L679.05 538.79 L679.40 538.83 L679.75 538.73 L680.10 538.59 L680.45 538.90 L680.80 538.95 L681.15 538.84 L681.50 538.91 L681.85 539.07 L682.20 538.93 L682.55 538.87 L682.90 538.73 L683.25 538.67 L683.60 539.12 L683.95 538.71 L684.30 539.14 L684.65 539.17 L685.00 538.68 L685.35 538.99 L685.70 538.72 L686.05 538.71 L686.40 538.72 L686.75 538.82 L687.10 538.83 L687.45 538.82 L687.80 538.74 L688.15 539.23 L688.50 538.86 L688.85 539.23 L689.20 538.99 L689.55 538.73 L689.90 539.25 L690.25 539.01 L690.60 538.89 L690.95 539.36 L691.30 538.96 L691.65 538.80 L692.00 538.95 L692.35 539.25 L692.70 538.82 L693.05 538.98 L693.40 539.35 L693.75 539.27 L694.10 539.22 L694.45 539.26 L694.80 539.39 L695.15 539.30 L695.50 539.30 L695.85 539.45 L696.20 539.31 L696.55 539.29 L696.90 539.09 L697.25 539.07 L697.60 539.05 L697.95 539.24 L698.30 539.15 L698.65 539.43 L699.00 539.55 L699.35 539.17 L699.70 539.28 L700.05 539.48 L700.40 539.15 L700.75 539.58 L701.10 539.37 L701.45 539.10 L701.80 539.62 L702.15 539.42 L702.50 539.52 L702.85 539.66 L703.20 539.68 L703.55 539.35 L703.90 539.17 L704.25 539.68 L704.60 539.73 L704.95 539.26 L705.30 539.36 L705.65 539.34 L706.00 539.65 L706.35 539.79 L706.70 539.35 L707.05 539.44 L707.40 539.75 L707.75 539.52 L708.10 539.38 L708.45 539.54 L708.80 539.27 L709.15 539.75 L709.50 539.50 L709.85 539.49 L710.20 539.73 L710.55 539.57 L710.90 539.89 L711.25 539.42 L711.60 539.62 L711.95 539.88 L712.30 539.76 L712.65 539.70 L713.00 539.72 L713.35 539.49 L713.70 539.58 L714.05 539.39 L714.40 539.40 L714.75 539.91 L715.10 539.75 L715.45 539.78 L715.80 539.73 L716.15 539.45 L716.50 539.58 L716.85 539.64 L717.20 539.98 L717.55 540.00 L717.90 540.01 L718.25 540.00 L718.60 539.71 L718.95 539.53 L719.30 540.00 L719.65 539.49 L720.00 539.93 L720.35 539.58 L720.70 539.85 L721.05 539.90 L721.40 539.97 L721.75 539.57 L722.10 539.89 L722.45 539.99 L722.80 539.98 L723.15 539.76 L723.50 540.11 L723.85 539.97 L724.20 539.91 L724.55 540.00 L724.90 539.82 L725.25 540.01 L725.60 539.69 L725.95 539.98 L726.30 539.97 L726.65 540.16 L727.00 539.98 L727.35 539.87 L727.70 540.07 L728.05 540.07 L728.40 539.81 L728.75 539.99 L729.10 539.80 L729.45 539.90 L729.80 539.99 L730.15 539.68 L730.50 540.17 L730.85 539.73 L731.20 539.83 L731.55 539.88 L731.90 539.71 L732.25 540.00 L732.60 539.86 L732.95 540.24 L733.30 540.00 L733.65 539.89 L734.00 540.04 L734.35 540.09 L734.70 539.83 L735.05 539.75 L735.40 539.89 L735.75 540.09 L736.10 540.07 L736.45 540.24 L736.80 539.85 L737.15 540.02 L737.50 540.22 L737.85 539.88 L738.20 540.00 L738.55 540.09 L738.90 540.14 L739.25 540.19 L739.60 540.37 L739.95 539.85 L740.30 540.34 L740.65 540.13 L741.00 540.19 L741.35 539.99 L741.70 540.12 L742.05 539.95 L742.40 539.88 L742.75 540.34 L743.10 540.25 L743.45 539.92 L743.80 539.93 L744.15 540.11 L744.50 540.36 L744.85 540.16 L745.20 540.21 L745.55 540.18 L745.90 540.44 L746.25 540.32 L746.60 540.05 L746.95 540.01 L747.30 540.28 L747.65 540.36 L748.00 540.02 L748.35 540.13 L748.70 540.36 L749.05 540.24 L749.40 540.13 L749.75 540.24 L750.10 540.22 L750.45 540.57 L750.80 540.38 L751.15 540.09 L751.50 540.20 L751.85 540.38 L752.20 540.01 L752.55 540.03 L752.90 540.45 L753.25 540.62 L753.60 540.51 L753.95 540.08 L754.30 540.32 L754.65 540.49 L755.00 540.13 L755.35 540.18 L755.70 540.31 L756.05 540.14 L756.40 540.13 L756.75 540.47 L757.10 540.29 L757.45 540.55 L757.80 540.43 L758.15 540.65 L758.50 540.28 L758.85 540.32 L759.20 540.27 L759.55 540.15 L759.90 540.30 L760.25 540.35 L760.60 540.44 L760.95 540.35 L761.30 540.74 L761.65 540.68 L762.00 540.37 L762.35 540.29 L762.70 540.47 L763.05 540.25 L763.40 540.30 L763.75 540.62 L764.10 540.28 L764.45 540.79 L764.80 540.26 L765.15 540.82 L765.50 540.46 L765.85 540.56 L766.20 540.48 L766.55 540.59 L766.90 540.49 L767.25 540.32 L767.60 540.29 L767.95 540.76 L768.30 540.56 L768.65 540.74 L769.00 540.32 L769.35 540.59 L769.70 540.62 L770.0 560.8 Z" fill="#b3fdfa"/>
    <g text-anchor="end">
      <text x="366" y="409.7">0</text><text x="366" y="440.8">-20</text><text x="366" y="471.9">-40</text><text x="366" y="503">-60</text><text x="366" y="534">-80</text><text x="366" y="565.1">-100</text>
    </g>
    <g text-anchor="middle">
      <text x="376.5" y="584">0</text><text x="442" y="584">500</text><text x="507.6" y="584">1000</text><text x="573.2" y="584">1500</text><text x="638.9" y="584">2000</text><text x="704.5" y="584">2500</text><text x="771" y="584">3000</text>
      <text x="573" y="597">Частота [Гц]</text>
      <text transform="translate(329 482) rotate(-90)" x="0" y="0">Амплитуда [дБ]</text>
    </g>
    <!-- overlay toolbar 2 -->
    <rect x="385.7" y="419" width="30" height="150" fill="#000" fill-opacity="0.075"/>
    <g fill="none" stroke="#ffffff" stroke-opacity="0.11" stroke-width="1.2">
      <rect x="391.5" y="420.5" width="22" height="24" rx="3"/>
      <rect x="391.5" y="451.5" width="22" height="24" rx="3"/>
      <rect x="391.5" y="482.5" width="22" height="24" rx="3"/>
      <rect x="391.5" y="513.5" width="22" height="24" rx="3"/>
      <rect x="391.5" y="544.5" width="22" height="24" rx="3"/>
      <path d="M402.5 487 V503 M394.5 495 H410.5 M394.5 526 H410.5" stroke-width="2"/>
      <path d="M396 433 L399 437 L404 424"/>
      <path d="M395 471 V459 L399 462 L403 458 L407 462 L410 459 V471 Z"/>
    </g>
  </svg>
</div>
</body>
</html>
